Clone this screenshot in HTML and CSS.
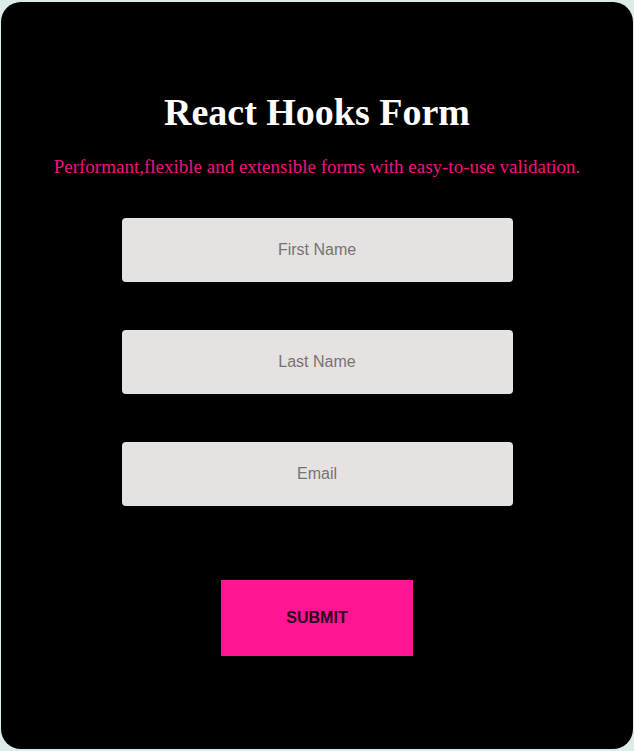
FILE: index.html
```html
<!DOCTYPE html>
<html>
<head>
<meta charset="utf-8">
<link rel="stylesheet" href="styles.css">
</head>
<body>
<div class="card">
  <h1 class="title">React Hooks Form</h1>
  <p class="subtitle">Performant,flexible and extensible forms with easy-to-use validation.</p>
  <form class="form">
    <input class="field" type="text" placeholder="First Name">
    <input class="field" type="text" placeholder="Last Name">
    <input class="field" type="email" placeholder="Email">
    <button class="submit" type="button">SUBMIT</button>
  </form>
</div>
</body>
</html>
```
FILE: styles.css
```css
html, body {
  margin: 0;
  padding: 0;
}
body {
  background: #dcebea;
  padding: 2px 1px;
  height: 751px;
  box-sizing: border-box;
}
.card {
  background: #000;
  border-radius: 20px;
  height: 747px;
  box-sizing: border-box;
  padding-top: 87px;
  display: flex;
  flex-direction: column;
  align-items: center;
}
.title {
  margin: 0;
  font-family: "Liberation Serif", serif;
  font-weight: bold;
  font-size: 38px;
  line-height: 46px;
  color: #fff;
}
.subtitle {
  margin: 21px 0 0;
  font-family: "Liberation Serif", serif;
  font-size: 19px;
  line-height: 22px;
  color: #f0147f;
}
.form {
  margin-top: 40px;
  display: flex;
  flex-direction: column;
  align-items: center;
  gap: 48px;
}
.field {
  width: 391px;
  height: 64px;
  box-sizing: border-box;
  border: none;
  border-radius: 4px;
  background: #e6e2e1;
  font-family: "Liberation Sans", sans-serif;
  font-size: 16px;
  text-align: center;
  outline: none;
}
.field::placeholder {
  color: #767373;
}
.submit {
  margin-top: 26px;
  width: 192px;
  height: 76px;
  border: none;
  border-radius: 0;
  background: #ff1493;
  font-family: "Liberation Sans", sans-serif;
  font-weight: bold;
  font-size: 16px;
  color: #2a0a1c;
}
```
